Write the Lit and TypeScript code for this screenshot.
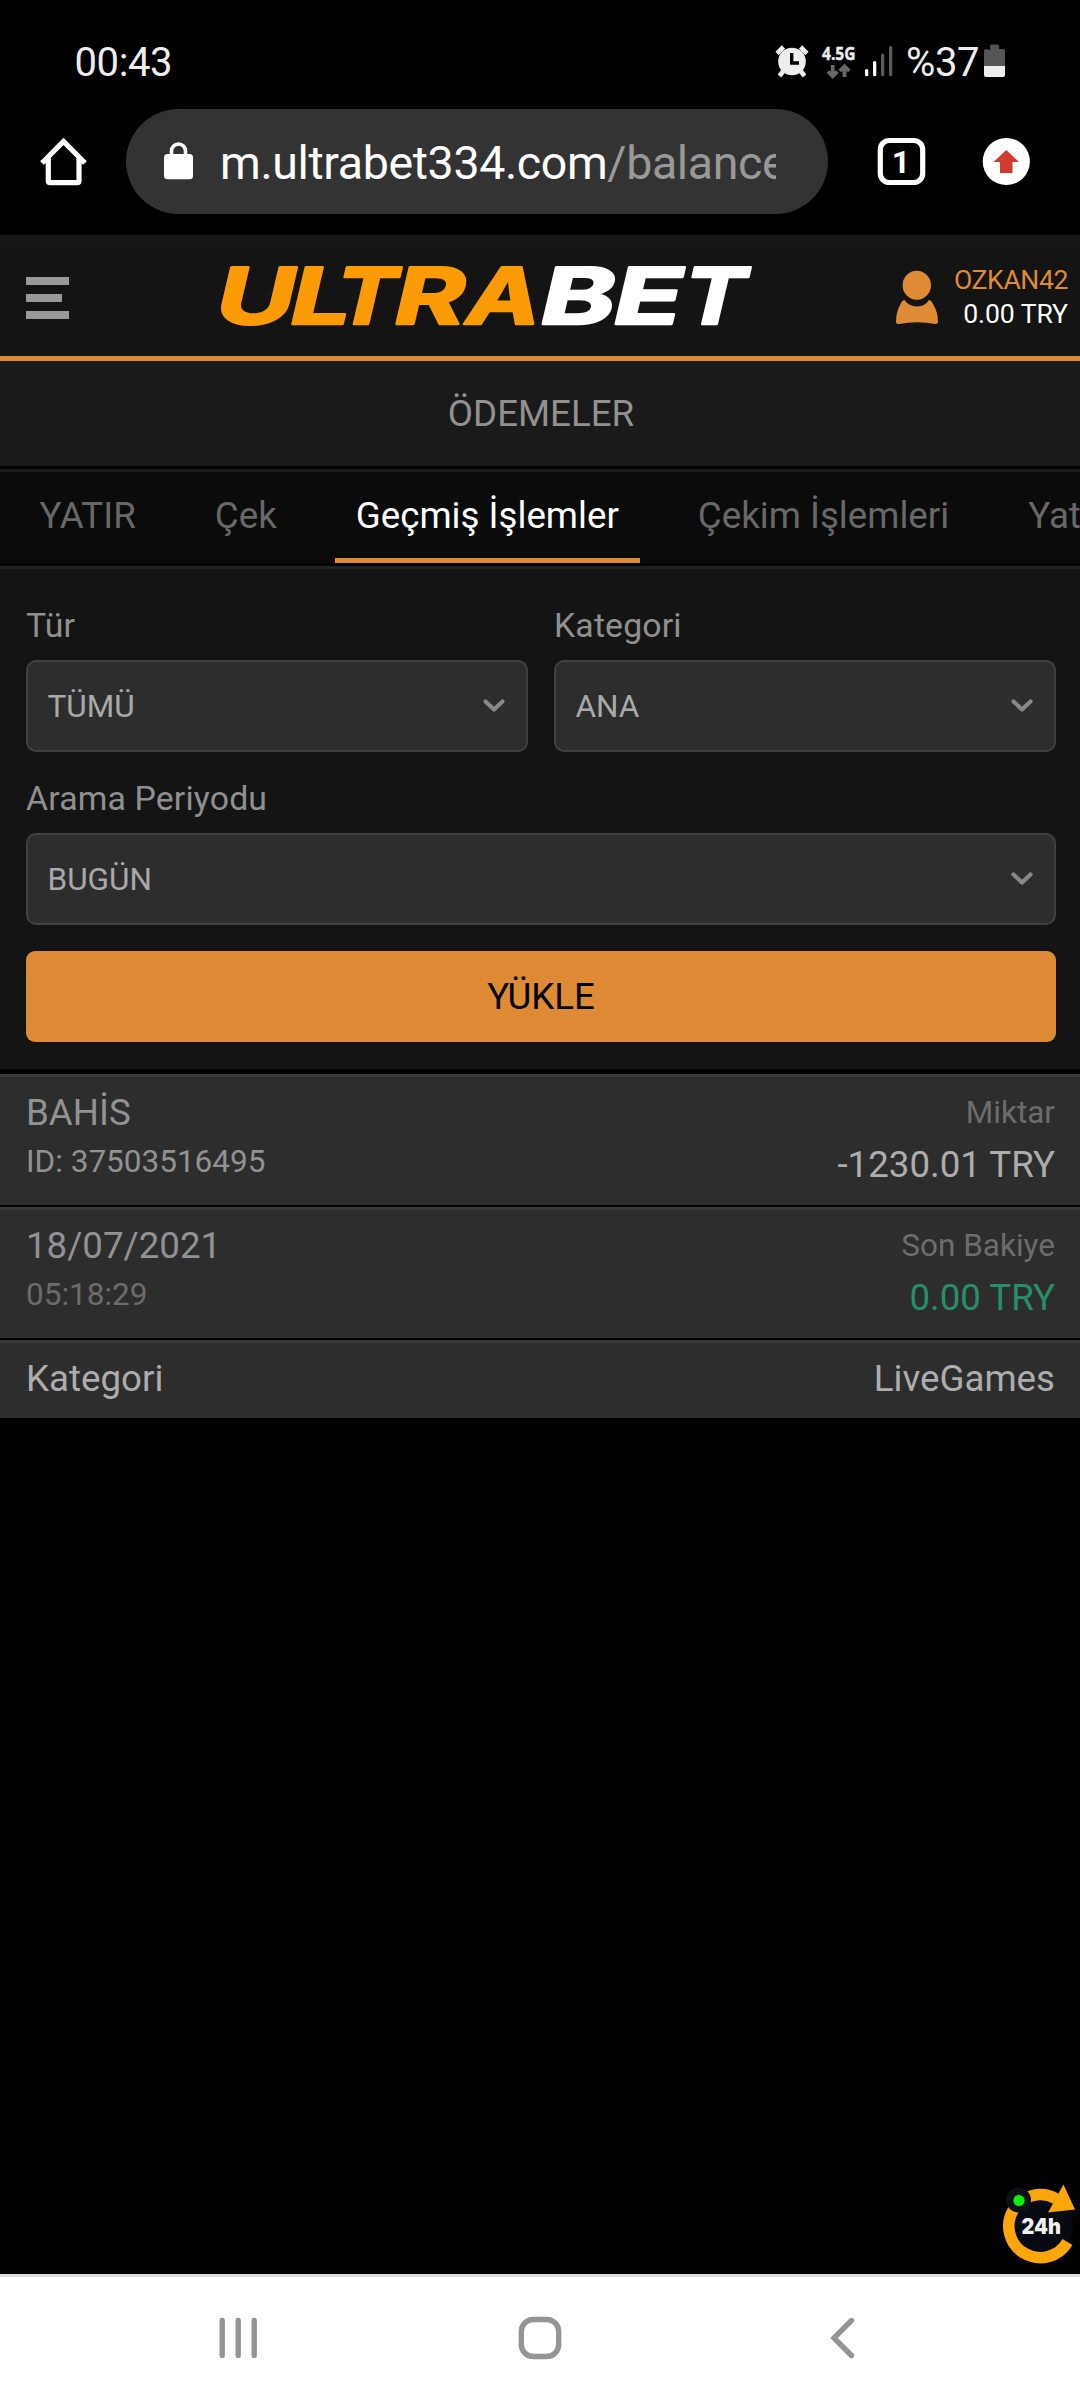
import { LitElement, html, css, svg } from "lit";
import { customElement, property } from "lit/decorators.js";
import { classMap } from "lit/directives/class-map.js";

@customElement("phone-status")
class PhoneStatus extends LitElement {
  static styles = css`
    :host { display: block; height: 109px; background: #000; color: #ededed; }
    .bar { display: flex; justify-content: space-between; align-items: flex-start; padding: 39px 74px 0 74.5px; }
    .time { font-size: 40px; line-height: 48px; letter-spacing: -0.4px; }
    .right { display: flex; align-items: flex-start; }
    .icons { display: block; margin-top: 1px; }
    .net { font: 700 17.5px "Open Sans", sans-serif; }
    .pct { font-size: 40px; line-height: 48px; margin-left: 12px; width: 73px; letter-spacing: -0.4px; white-space: nowrap; }
  `;
  render() {
    return html`<div class="bar">
      <span class="time">00:43</span>
      <div class="right">
        <svg class="icons" width="120" height="42" viewBox="774 40 120 42">
          <g fill="none" stroke="#ededed" stroke-width="4.6">
            <path d="M777 53.5 L783.5 47 M807 53.5 L800.5 47" />
            <path d="M784 70 L779.5 76 M800 70 L804.5 76" />
          </g>
          <circle cx="792" cy="61.5" r="13.8" fill="#ededed" />
          <path d="M791.7 53 V63 H799" fill="none" stroke="#000" stroke-width="3.4" />
          <text class="net" x="822" y="60" fill="#ededed" stroke="#ededed" stroke-width="0.4" textLength="33.5" lengthAdjust="spacingAndGlyphs">4.5G</text>
          <g fill="none" stroke="#686868" stroke-width="3.8">
            <path d="M832.7 65 V76 M828 71.5 L832.7 76.3 L837.4 71.5" />
            <path d="M844.5 77 V66 M839.8 71 L844.5 66.3 L849.2 71" />
          </g>
          <rect x="865" y="69" width="3.3" height="7.3" rx="1.5" fill="#fff" />
          <rect x="873" y="61" width="3.3" height="15.3" rx="1.5" fill="#fff" />
          <rect x="881" y="53.5" width="3.3" height="22.8" rx="1.5" fill="#5b5b5b" />
          <rect x="889" y="46" width="3.3" height="30.3" rx="1.5" fill="#5b5b5b" />
        </svg>
        <span class="pct">%37</span>
        <svg class="icons" width="27" height="42" viewBox="979 40 27 42">
          <path d="M990 50 V46 Q990 44.5 991.5 44.5 H997.5 Q999 44.5 999 46 V49 H1003 Q1005 49 1005 51 V66 H984 V51 Q984 49 986 49 Z" fill="#555" />
          <path d="M984 66 H1005 V75 Q1005 77 1003 77 H986 Q984 77 984 75 Z" fill="#ededed" />
        </svg>
      </div>
    </div>`;
  }
}

@customElement("browser-bar")
class BrowserBar extends LitElement {
  static styles = css`
    :host { display: block; height: 126px; background: #000; }
    .bar { display: flex; align-items: flex-start; height: 105px; }
    .home { width: 126px; height: 105px; flex: none; }
    .pill { display: flex; align-items: center; width: 702px; height: 105px; border-radius: 53px; background: #333; flex: none; }
    .lock { width: 94px; height: 105px; flex: none; }
    .url { width: 556px; overflow: hidden; white-space: nowrap; font-size: 46.5px; line-height: 60px; letter-spacing: -0.37px; color: #fff; padding-top: 2px; }
    .path { color: #999; }
    .actions { width: 252px; height: 105px; flex: none; }
    .count { font: 700 32px Roboto, sans-serif; }
  `;
  render() {
    return html`<div class="bar">
      <svg class="home" viewBox="0 109 126 105">
        <path d="M42 163 L63.5 141.5 L85 163 M48.3 158 V181 Q48.3 182.7 50.3 182.7 H77 Q79 182.7 79 181 V158"
          fill="none" stroke="#fff" stroke-width="5.2" />
      </svg>
      <div class="pill">
        <svg class="lock" viewBox="126 109 94 105">
          <rect x="164" y="154" width="29" height="25.2" rx="3.5" fill="#fff" />
          <path d="M171.5 156 V151 a7 7 0 0 1 14 0 V156" fill="none" stroke="#fff" stroke-width="3.6" />
        </svg>
        <div class="url">m.ultrabet334.com<span class="path">/balance</span></div>
      </div>
      <svg class="actions" viewBox="828 109 252 105">
        <rect x="880.3" y="140.5" width="42.4" height="42" rx="9" fill="none" stroke="#fff" stroke-width="5.2" />
        <text class="count" x="901" y="172.5" text-anchor="middle" fill="#fff">1</text>
        <circle cx="1006.3" cy="161.5" r="23.6" fill="#fff" />
        <path d="M1006.3 150 L1019 162 H1012.5 V173 H1000 V162 H993.5 Z" fill="#d13c2f" />
      </svg>
    </div>`;
  }
}

// Logo letters: glyph, left edge, advance width, and colour.
const LOGO: [string, number, number, string][] = [
  ["U", 211.5, 78.5, "#fb9b05"],
  ["L", 286, 60, "#fb9b05"],
  ["T", 330.5, 61, "#fb9b05"],
  ["R", 390, 70, "#fb9b05"],
  ["A", 462, 73, "#fb9b05"],
  ["B", 536, 74.5, "#fff"],
  ["E", 609, 68, "#fff"],
  ["T", 678.5, 62, "#fff"],
];

@customElement("site-header")
class SiteHeader extends LitElement {
  static styles = css`
    :host { display: block; }
    .bar { display: flex; height: 121px; background: linear-gradient(#17171a, #141414 14px); border-bottom: 5px solid #df8b35; }
    .menu { width: 200px; height: 121px; flex: none; }
    .logo { width: 580px; height: 121px; flex: none; }
    .mark { font: 700 78px Inter, sans-serif; stroke-width: 2.6px; stroke-linejoin: round; }
    .user { display: flex; flex: 1; justify-content: flex-end; padding-right: 12px; }
    .avatar { width: 50px; height: 121px; flex: none; }
    .lines { display: flex; flex-direction: column; align-items: flex-end; width: 125px; flex: none; padding-top: 28px; font-size: 26.6px; line-height: 34px; white-space: nowrap; }
    .name { color: #df8b35; letter-spacing: -0.4px; }
    .sum { color: #fff; letter-spacing: -0.1px; }
  `;
  render() {
    return html`<div class="bar">
      <svg class="menu" viewBox="0 235 200 121">
        <path d="M26 277 H69 V285 H26 Z M26 294 H62 V302 H26 Z M26 311 H69 V319 H26 Z" fill="#999" />
      </svg>
      <svg class="logo" viewBox="200 235 580 121">
        <g class="mark" transform="translate(0 324) skewX(-13.2)">
          ${LOGO.map(([c, x, w, fill]) => svg`<text x=${x} y="0" textLength=${w} lengthAdjust="spacingAndGlyphs" fill=${fill} stroke=${fill}>${c}</text>`)}
        </g>
      </svg>
      <div class="user">
        <svg class="avatar" viewBox="893 235 50 121">
          <ellipse cx="916.8" cy="285.2" rx="14.2" ry="14.5" fill="#df8b35" />
          <path d="M904.5 300 Q909 306.5 917 306.5 Q925 306.5 929 300 Q931 300 933 304 Q938 312 938 322 Q938 324 935.5 324 Q917 320.5 899 324 Q896 324 896 322 Q896 312 900.5 304 Q902.5 300 904.5 300 Z" fill="#df8b35" />
        </svg>
        <div class="lines"><span class="name">OZKAN42</span><span class="sum">0.00 TRY</span></div>
      </div>
    </div>`;
  }
}

@customElement("tab-strip")
class TabStrip extends LitElement {
  @property({ attribute: false }) tabs: string[] = [];
  @property({ type: Number }) active = 0;
  static styles = css`
    :host { display: block; }
    .strip { display: flex; gap: 37px; height: 91px; padding-left: 18.4px; background: #0b0b0b; border-top: 3px solid #1b1b1b; overflow: hidden; }
    .tab { flex: none; box-sizing: border-box; height: 91px; padding: 22px 21px 0; border-bottom: 5px solid transparent; font-size: 36.7px; line-height: 43px; color: #686868; white-space: nowrap; }
    .on { color: #fff; border-color: #df8b35; }
  `;
  render() {
    return html`<div class="strip">
      ${this.tabs.map((t, i) => html`<div class=${classMap({ tab: true, on: i === this.active })}>${t}</div>`)}
    </div>`;
  }
}

@customElement("select-field")
class SelectField extends LitElement {
  @property() label = "";
  @property() value = "";
  static styles = css`
    :host { display: block; }
    .label { display: block; font-size: 33.8px; line-height: 40px; color: #909090; margin-bottom: 14px; letter-spacing: 0.15px; }
    .box { box-sizing: border-box; display: flex; align-items: center; justify-content: space-between; height: 92px; padding: 0 20px 0 19.5px; border: 2px solid #414141; border-radius: 10px; background: #2d2d2d; font-size: 31.5px; line-height: 38px; color: #a9a9a9; }
    .value { padding-top: 1px; }
  `;
  render() {
    return html`<span class="label">${this.label}</span>
      <div class="box">
        <span class="value">${this.value}</span>
        <svg width="24" height="16" viewBox="0 0 24 16">
          <path d="M3.5 3.5 L12 11.5 L20.5 3.5" fill="none" stroke="#888" stroke-width="4.2" stroke-linecap="round" stroke-linejoin="round" />
        </svg>
      </div>`;
  }
}

@customElement("app-root")
class AppRoot extends LitElement {
  static styles = css`
    :host { display: block; }
    .screen { display: flex; flex-direction: column; position: relative; width: 1080px; height: 2400px; overflow: hidden; background: #000; font-family: Roboto, "Liberation Sans", sans-serif; }
    .title { height: 105px; box-sizing: border-box; padding: 31px 0 0 2px; text-align: center; background: #1a1a1a; color: #919191; font-size: 36.7px; line-height: 43px; margin-bottom: 3px; }
    .filters { display: grid; grid-template-columns: 502px 502px; column-gap: 26px; row-gap: 27px; box-sizing: border-box; height: 503px; margin-top: 3px; margin-bottom: 5px; padding: 37px 24px 0 26px; background: #141414; border-top: 3px solid #212121; align-content: start; }
    .wide { grid-column: 1 / 3; }
    .load { grid-column: 1 / 3; height: 91px; margin-top: -1px; box-sizing: border-box; padding-top: 24px; text-align: center; border-radius: 9px; background: #df8b35; color: #000; font-size: 36.7px; line-height: 43px; }
    .row { display: flex; justify-content: space-between; box-sizing: border-box; height: 131px; margin-bottom: 2px; padding: 14px 25px 0 26px; background: #2d2d2d; border-top: 3px solid #393939; color: #929292; }
    .short { height: 78px; color: #adadad; }
    .col { display: flex; flex-direction: column; white-space: nowrap; }
    .end { align-items: flex-end; }
    .big { font-size: 36.7px; line-height: 43px; }
    .small { font-size: 31.5px; line-height: 43px; }
    .left-sub { margin-top: 6px; }
    .right-sub { margin-top: 9px; }
    .dim { color: #6c6c6c; }
    .bright { color: #adadad; }
    .green { color: #268e69; }
    .space { flex: 1; }
    .nav { height: 123px; background: #fff; border-top: 3px solid #dedede; }
    .nav svg { display: block; }
    .badge { position: absolute; left: 998px; top: 2180px; }
    .hours { font: 900 21px Inter, sans-serif; }
  `;
  render() {
    return html`<div class="screen">
      <phone-status></phone-status>
      <browser-bar></browser-bar>
      <site-header></site-header>
      <div class="title">ÖDEMELER</div>
      <tab-strip .tabs=${["YATIR", "Çek", "Geçmiş İşlemler", "Çekim İşlemleri", "Yat"]} .active=${2}></tab-strip>
      <div class="filters">
        <select-field label="Tür" value="TÜMÜ"></select-field>
        <select-field label="Kategori" value="ANA"></select-field>
        <select-field class="wide" label="Arama Periyodu" value="BUGÜN"></select-field>
        <div class="load">YÜKLE</div>
      </div>
      <div class="row">
        <div class="col"><span class="big">BAHİS</span><span class="small left-sub">ID: 37503516495</span></div>
        <div class="col end"><span class="small dim">Miktar</span><span class="big bright right-sub">-1230.01 TRY</span></div>
      </div>
      <div class="row">
        <div class="col"><span class="big">18/07/2021</span><span class="small left-sub dim">05:18:29</span></div>
        <div class="col end"><span class="small dim">Son Bakiye</span><span class="big green right-sub">0.00 TRY</span></div>
      </div>
      <div class="row short"><span class="big">Kategori</span><span class="big">LiveGames</span></div>
      <div class="space"></div>
      <div class="nav">
        <svg width="1080" height="123" viewBox="0 2277 1080 123" fill="none" stroke="#959595" stroke-width="5.4" stroke-linecap="round">
          <path d="M222.2 2320.5 V2355.5 M238.2 2320.5 V2355.5 M254.2 2320.5 V2355.5" />
          <rect x="521.3" y="2319.5" width="37.4" height="37" rx="12" />
          <path d="M851.5 2320.5 L834 2338 L851.5 2355.5" />
        </svg>
      </div>
      <svg class="badge" width="82" height="90" viewBox="998 2180 82 90">
        <circle cx="1041" cy="2225" r="32" fill="#070a12" />
        <path d="M1067.5 2242 A31.5 31.5 0 1 1 1056 2198.8" fill="none" stroke="#fba70b" stroke-width="11.5" />
        <path d="M1063.5 2184.5 L1075 2209.5 L1048 2212.5 Z" fill="#fba70b" />
        <circle cx="1018.5" cy="2200" r="12.5" fill="#0b1218" />
        <circle cx="1019" cy="2200.5" r="5.6" fill="#0cf00c" />
        <text class="hours" x="1021.5" y="2234" textLength="39.5" lengthAdjust="spacingAndGlyphs" fill="#f0f0f0">24h</text>
      </svg>
    </div>`;
  }
}
